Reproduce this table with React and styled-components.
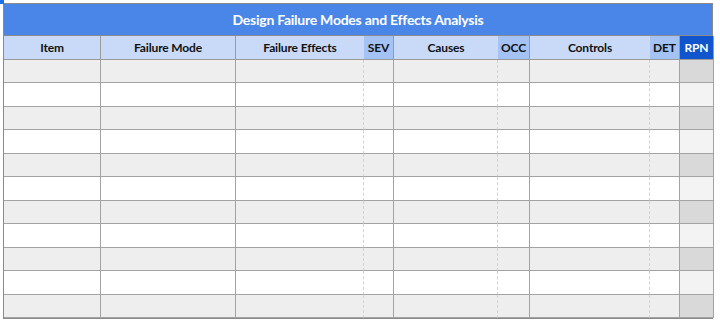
import React from "react"
import styled, { createGlobalStyle } from "styled-components"

const GlobalStyle = createGlobalStyle`
    body {
        margin: 0;
        background: #ffffff;
        font-family: Lato, "Open Sans", sans-serif;
    }
`

const columns = [
    { label: "Item", width: 97 },
    { label: "Failure Mode", width: 135 },
    { label: "Failure Effects", width: 128, dotted: true },
    { label: "SEV", width: 30, rating: true },
    { label: "Causes", width: 104, dotted: true },
    { label: "OCC", width: 32, rating: true },
    { label: "Controls", width: 120, dotted: true },
    { label: "DET", width: 30, rating: true },
    { label: "RPN", width: 34, total: true },
]

const rows = Array.from({ length: 11 }, (_, i) => i)

const Page = styled.div`
    position: relative;
    padding: 3px 0 0 3px;
`

const Handle = styled.span`
    position: absolute;
    top: 0;
    left: 0;
    width: 4px;
    height: 4px;
    background: #1a73e8;
`

const Sheet = styled.div`
    width: 710px;
    border: 1px solid #8a8a8a;
    box-sizing: border-box;
`

const Title = styled.div`
    height: 31px;
    display: flex;
    align-items: center;
    justify-content: center;
    background: #4a86e8;
    color: #ffffff;
    font-weight: 700;
    font-size: 14px;
    letter-spacing: -0.25px;
    border-bottom: 1px solid #8a8a8a;
`

const Grid = styled.div`
    display: grid;
    grid-template-columns: ${columns.map((c) => `${c.width}px`).join(" ")};
    grid-auto-rows: 23.5px;
    margin-right: -1px;
`

const HeadCell = styled.div`
    display: flex;
    align-items: center;
    justify-content: center;
    font-size: 12px;
    font-weight: 700;
    letter-spacing: -0.15px;
    color: ${(p) => (p.$total ? "#ffffff" : "#111111")};
    background: ${(p) =>
        p.$total ? "#1155cc" : p.$rating ? "#a4c2f4" : "#c9daf8"};
    border-right: ${(p) => (p.$dotted ? "none" : "1px solid #9a9a9a")};
    border-bottom: 1px solid #9a9a9a;
    box-sizing: border-box;
`

const Cell = styled.div`
    background: ${(p) =>
        p.$total
            ? p.$odd
                ? "#f3f3f3"
                : "#d9d9d9"
            : p.$odd
            ? "#ffffff"
            : "#eeeeee"};
    border-right: ${(p) =>
        p.$dotted ? "1px dashed #d2d2d2" : "1px solid #a3a3a3"};
    border-bottom: 1px solid #a3a3a3;
    box-sizing: border-box;
`

function App() {
    return (
        <Page>
            <GlobalStyle />
            <Handle />
            <Sheet>
                <Title>Design Failure Modes and Effects Analysis</Title>
                <Grid>
                    {columns.map((c) => (
                        <HeadCell
                            key={c.label}
                            $rating={c.rating}
                            $total={c.total}
                            $dotted={c.dotted}
                        >
                            {c.label}
                        </HeadCell>
                    ))}
                    {rows.map((r) =>
                        columns.map((c) => (
                            <Cell
                                key={`${r}-${c.label}`}
                                $odd={r % 2 === 1}
                                $total={c.total}
                                $dotted={c.dotted}
                            />
                        ))
                    )}
                </Grid>
            </Sheet>
        </Page>
    )
}

export default App
